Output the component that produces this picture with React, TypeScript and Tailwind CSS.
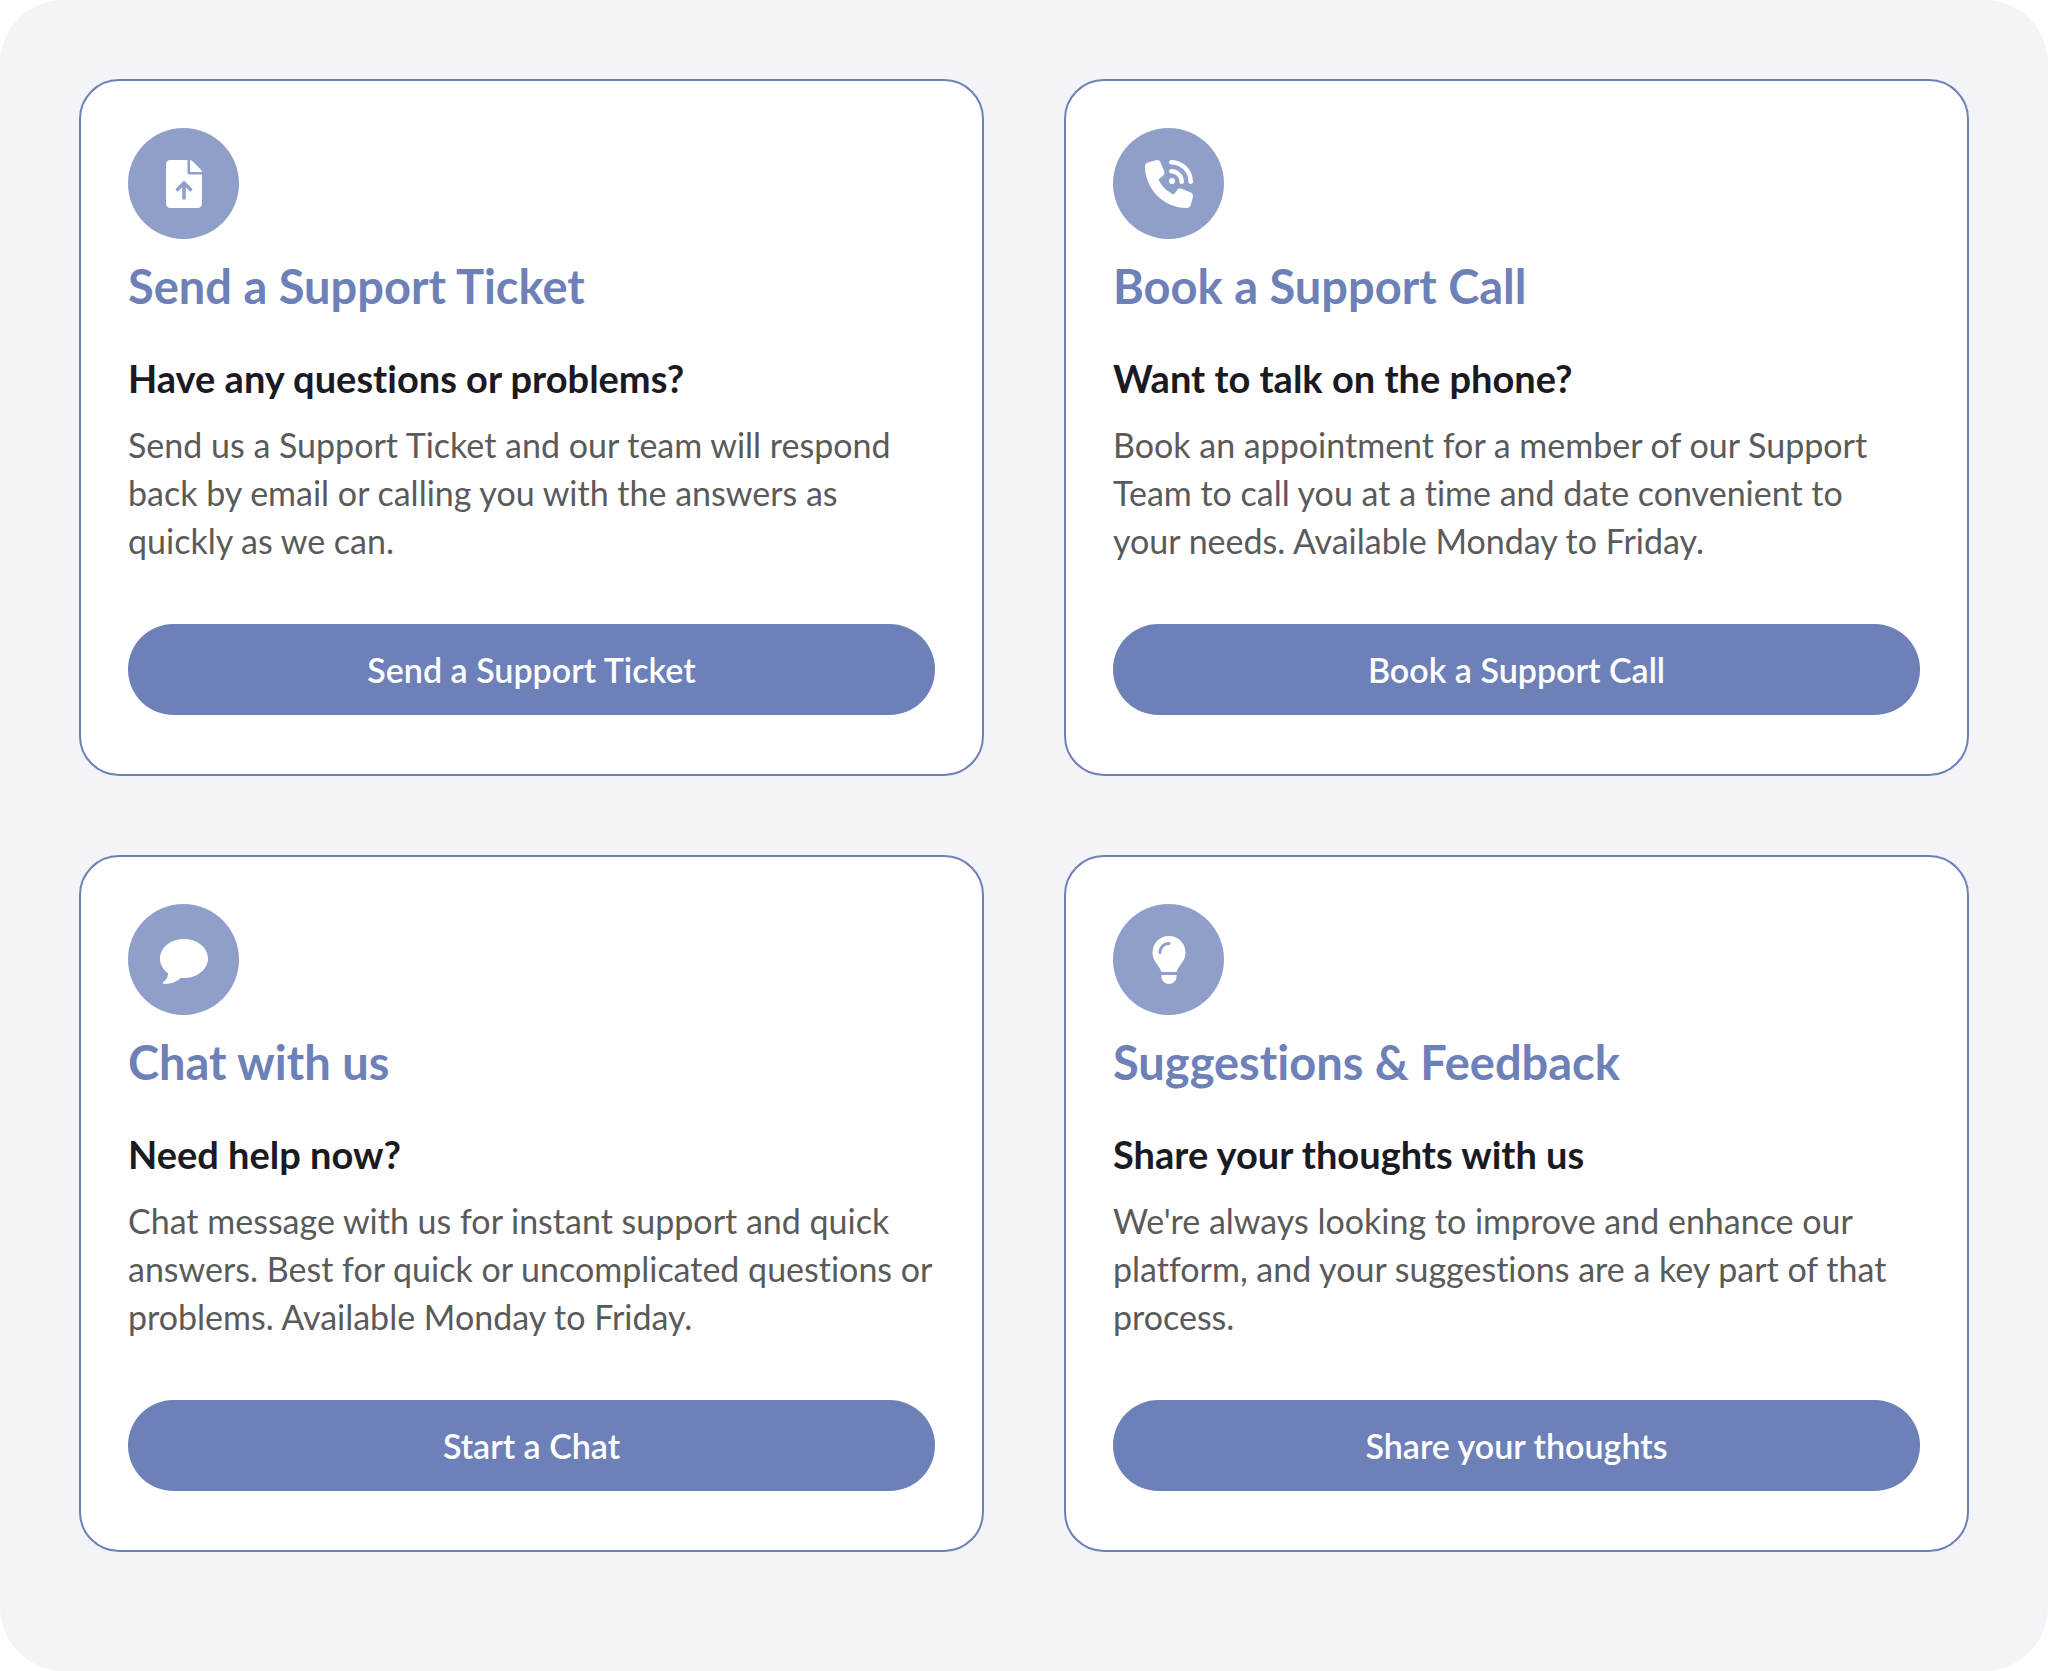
import { FaLightbulb, FaPhoneVolume } from "react-icons/fa6";

function FileUploadIcon({ className }: { className?: string }) {
  return (
    <svg viewBox="0 0 36 48" fill="currentColor" className={className} aria-hidden="true">
      <path d="M5 0H21.500V12.500Q21.500 14.500 23.500 14.500H36V43Q36 48 31 48H5Q0 48 0 43V5Q0 0 5 0Z" />
      <path d="M24 0Q25.500 .2 26.500 1.200L35 9.700Q36 10.700 36 12H24Z" />
      <path
        d="M18 38V23.500M11.500 29.500L18 23L24.500 29.500"
        fill="none"
        stroke="#909fca"
        strokeWidth="3.6"
        strokeLinecap="round"
        strokeLinejoin="round"
      />
    </svg>
  );
}

function ChatIcon({ className }: { className?: string }) {
  return (
    <svg viewBox="0 0 48 48" fill="currentColor" className={className} aria-hidden="true">
      <path d="M24 3C37.300 3 48 11.700 48 22.500S37.300 42 24 42Q22.500 42 21 41.800C17.500 45.500 11.500 48 4 48C2.800 48 2.500 46.600 3.500 45.900C6.500 43.500 8 41 8 37.300C3.300 33.700 0 28.600 0 22.500C0 11.700 10.700 3 24 3Z" />
    </svg>
  );
}

const options = [
  {
    icon: FileUploadIcon,
    title: "Send a Support Ticket",
    question: "Have any questions or problems?",
    text: "Send us a Support Ticket and our team will respond back by email or calling you with the answers as quickly as we can.",
    action: "Send a Support Ticket",
  },
  {
    icon: FaPhoneVolume,
    title: "Book a Support Call",
    question: "Want to talk on the phone?",
    text: "Book an appointment for a member of our Support Team to call you at a time and date convenient to your\u00a0needs. Available Monday to Friday.",
    action: "Book a Support Call",
  },
  {
    icon: ChatIcon,
    title: "Chat with us",
    question: "Need help now?",
    text: "Chat message with us for instant support and quick answers. Best for quick or uncomplicated questions or problems. Available Monday to Friday.",
    action: "Start a Chat",
  },
  {
    icon: FaLightbulb,
    title: "Suggestions & Feedback",
    question: "Share your thoughts with us",
    text: "We're always looking to improve and enhance our platform, and your suggestions are a key part of that process.",
    action: "Share your thoughts",
  },
];

export default function App() {
  return (
    <div className="bg-white font-['Lato',sans-serif] [font-variant-ligatures:no-common-ligatures]">
      <main className="grid grid-cols-1 gap-x-20 gap-y-[79px] rounded-[64px] bg-[#f3f3f8] px-[79px] pt-[79px] pb-[119px] lg:grid-cols-2">
        {options.map(({ icon: Icon, title, question, text, action }) => (
          <section
            key={title}
            className="flex flex-col rounded-[40px] border-2 border-[#6d80b8] bg-white px-[47px] pt-[47px] pb-[59px]"
          >
            <div className="flex size-[111px] items-center justify-center rounded-full bg-[#909fca] text-white">
              <Icon className="size-12" />
            </div>
            <h2 className="mt-[19px] text-[47px] leading-14 font-bold text-[#6d80b8]">{title}</h2>
            <h3 className="mt-10 text-[38px] leading-12 font-bold text-[#1b1a22]">{question}</h3>
            <p className="mt-[19px] text-[34px] leading-12 text-[#5a5a5a]">{text}</p>
            <button
              type="button"
              className="mt-[59px] h-[91px] cursor-pointer rounded-full bg-[#6d80b8] text-[34px] font-semibold text-white hover:bg-[#5c70aa]"
            >
              {action}
            </button>
          </section>
        ))}
      </main>
    </div>
  );
}
